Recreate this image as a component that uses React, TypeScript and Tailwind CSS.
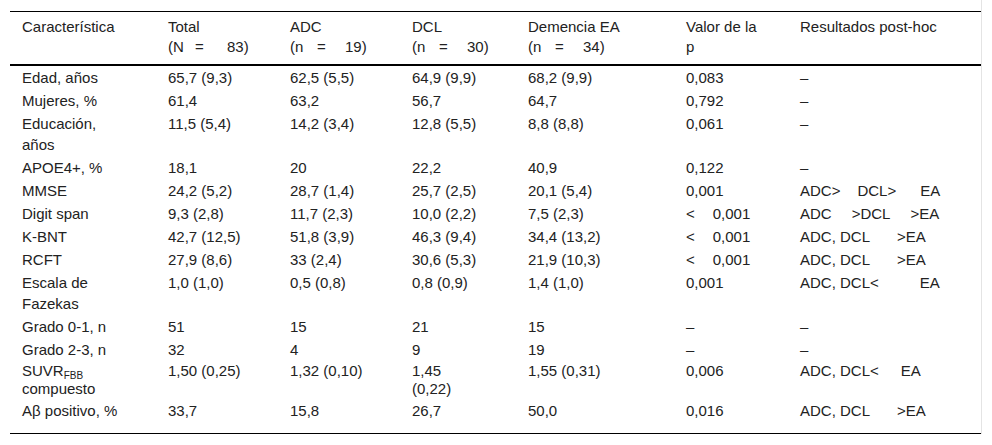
function G({ w }: { w: string }) {
  return <span className={`inline-block ${w}`} />;
}

function N({ label, num, wide }: { label: string; num: string; wide?: boolean }) {
  return (
    <>
      <span className="inline-block w-[27px]">{label}</span>
      <span className={`inline-block ${wide ? 'w-[32px]' : 'w-[28px]'}`}>=</span>
      {num})
    </>
  );
}

const lt = (
  <>
    {'<'}
    <G w="w-[18px]" />
    0,001
  </>
);

const rows: React.ReactNode[][] = [
  ['Edad, años', '65,7 (9,3)', '62,5 (5,5)', '64,9 (9,9)', '68,2 (9,9)', '0,083', '–'],
  ['Mujeres, %', '61,4', '63,2', '56,7', '64,7', '0,792', '–'],
  [<>Educación,<br />años</>, '11,5 (5,4)', '14,2 (3,4)', '12,8 (5,5)', '8,8 (8,8)', '0,061', '–'],
  ['APOE4+, %', '18,1', '20', '22,2', '40,9', '0,122', '–'],
  [
    'MMSE', '24,2 (5,2)', '28,7 (1,4)', '25,7 (2,5)', '20,1 (5,4)', '0,001',
    <>ADC&gt;<G w="w-[17px]" />DCL&gt;<G w="w-[24px]" />EA</>,
  ],
  [
    'Digit span', '9,3 (2,8)', '11,7 (2,3)', '10,0 (2,2)', '7,5 (2,3)', lt,
    <>ADC<G w="w-[20px]" />&gt;DCL<G w="w-[20px]" />&gt;EA</>,
  ],
  ['K-BNT', '42,7 (12,5)', '51,8 (3,9)', '46,3 (9,4)', '34,4 (13,2)', lt, <>ADC, DCL<G w="w-[27px]" />&gt;EA</>],
  ['RCFT', '27,9 (8,6)', '33 (2,4)', '30,6 (5,3)', '21,9 (10,3)', lt, <>ADC, DCL<G w="w-[27px]" />&gt;EA</>],
  [
    <>Escala de<br />Fazekas</>, '1,0 (1,0)', '0,5 (0,8)', '0,8 (0,9)', '1,4 (1,0)', '0,001',
    <>ADC, DCL&lt;<G w="w-[41px]" />EA</>,
  ],
  ['Grado 0-1, n', '51', '15', '21', '15', '–', '–'],
  ['Grado 2-3, n', '32', '4', '9', '19', '–', '–'],
  [
    <>SUVR<span className="relative top-[3px] text-[10px] leading-none">FBB</span><br />compuesto</>,
    '1,50 (0,25)',
    '1,32 (0,10)',
    <>1,45<br />(0,22)</>,
    '1,55 (0,31)',
    '0,006',
    <>ADC, DCL&lt;<G w="w-[22px]" />EA</>,
  ],
  ['Aβ positivo, %', '33,7', '15,8', '26,7', '50,0', '0,016', <>ADC, DCL<G w="w-[27px]" />&gt;EA</>],
];

const widths = ['w-[146px]', 'w-[122px]', 'w-[122px]', 'w-[116px]', 'w-[158px]', 'w-[114px]', 'w-[193px]'];

const headers: React.ReactNode[] = [
  'Característica',
  <>Total<br /><N label="(N" num="83" wide /></>,
  <>ADC<br /><N label="(n" num="19" /></>,
  <>DCL<br /><N label="(n" num="30" /></>,
  <>Demencia EA<br /><N label="(n" num="34" /></>,
  <>Valor de la<br />p</>,
  'Resultados post-hoc',
];

export default function App() {
  return (
    <div className="min-h-screen bg-white pl-[10px] font-['Liberation_Sans',Arial,sans-serif] text-[15px] text-[#222]">
      <div className="w-[972px] border-r border-[#e4e4e4] pt-[11px]">
        <table className="w-[971px] table-fixed border-collapse border-b border-t border-black">
          <colgroup>
            {widths.map((w, i) => (
              <col key={i} className={w} />
            ))}
          </colgroup>
          <thead>
            <tr className="border-b-2 border-black">
              {headers.map((h, i) => (
                <th key={i} className="whitespace-nowrap px-3 pb-[7px] pt-[5px] text-left align-top font-normal leading-[20px]">
                  {h}
                </th>
              ))}
            </tr>
          </thead>
          <tbody>
            {rows.map((r, i) => {
              const last = i === rows.length - 1;
              const tight = i === 11;
              return (
                <tr key={i}>
                  {r.map((cell, j) => (
                    <td
                      key={j}
                      className={`whitespace-nowrap px-3 pt-[1px] align-top ${tight ? 'leading-[18px]' : 'leading-[21px]'} ${last ? 'pb-[12px]' : 'pb-[1px]'}`}
                    >
                      {cell}
                    </td>
                  ))}
                </tr>
              );
            })}
          </tbody>
        </table>
      </div>
    </div>
  );
}
